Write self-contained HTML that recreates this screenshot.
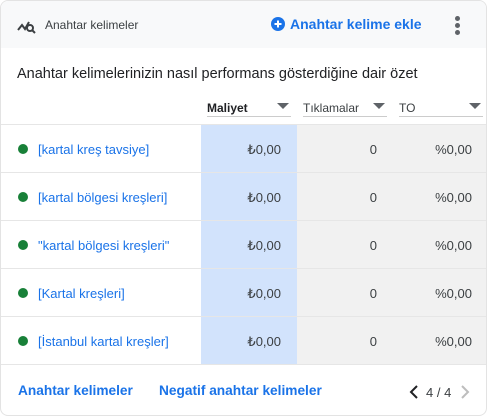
<!DOCTYPE html>
<html><head><meta charset="utf-8"><style>
*{margin:0;padding:0;box-sizing:border-box}
body{width:487px;height:416px;background:#fff;font-family:"Liberation Sans",Arial,sans-serif;position:relative;overflow:hidden}
.card{position:absolute;left:0;top:0;width:487px;height:416px;border:1px solid #e3e3e3;border-radius:8px;overflow:hidden}
.hdr{position:absolute;left:0;top:0;width:487px;height:47px;background:#f8f9fa}
.t{position:absolute;white-space:nowrap}
.blue{color:#1a73e8}
.col{position:absolute;top:124px;height:240px}
.row{position:absolute;left:0;width:487px;height:1px;background:#e6e6e6}
.dot{position:absolute;left:17px;width:10px;height:10px;border-radius:50%;background:#188038}
.hc{position:absolute;top:96px;height:20px;border-bottom:1px solid #ccc;font-size:12px;color:#3c4043}
.tri{position:absolute;right:2px;top:6px;width:0;height:0;border-left:6px solid transparent;border-right:6px solid transparent;border-top:6px solid #5f6368}
.num{position:absolute;font-size:13px;color:#3c4043;text-align:right}
.kw{position:absolute;left:37px;font-size:13px;color:#1a73e8}
</style></head><body>
<div class="card">
<div class="hdr"></div>
<svg style="position:absolute;left:16px;top:17px" width="20" height="16" viewBox="0 0 20 16"><path d="M1 12 L5 7 L8 11 L12 4" fill="none" stroke="#3c4043" stroke-width="2"/><circle cx="13" cy="10" r="3" fill="none" stroke="#3c4043" stroke-width="2"/><path d="M15 12 L18 15" stroke="#3c4043" stroke-width="2"/></svg>
<div class="t" style="left:44px;top:17px;font-size:12px;color:#3c4043">Anahtar kelimeler</div>
<svg style="position:absolute;left:270px;top:16px" width="14" height="14" viewBox="0 0 14 14"><circle cx="7" cy="7" r="7" fill="#1a73e8"/><path d="M7 3.5V10.5M3.5 7H10.5" stroke="#fff" stroke-width="2"/></svg>
<div class="t blue" style="left:289px;top:15px;font-size:14px;font-weight:bold">Anahtar kelime ekle</div>
<div style="position:absolute;left:454px;top:15px;width:5px;height:5px;border-radius:50%;background:#5f6368"></div>
<div style="position:absolute;left:454px;top:22px;width:5px;height:5px;border-radius:50%;background:#5f6368"></div>
<div style="position:absolute;left:454px;top:29px;width:5px;height:5px;border-radius:50%;background:#5f6368"></div>
<div class="t" style="left:16px;top:65px;font-size:14.5px;color:#202124">Anahtar kelimelerinizin nasıl performans gösterdiğine dair özet</div>
<div class="hc" style="left:206px;width:84px;font-weight:bold;color:#202124"><span style="position:absolute;top:4px">Maliyet</span><div class="tri"></div></div>
<div class="hc" style="left:302px;width:84px"><span style="position:absolute;top:4px">Tıklamalar</span><div class="tri"></div></div>
<div class="hc" style="left:398px;width:84px"><span style="position:absolute;top:4px">TO</span><div class="tri"></div></div>
<div class="col" style="left:200px;width:96px;background:#d2e3fc"></div>
<div class="col" style="left:296px;width:191px;background:#f1f1f1"></div>
<div class="row" style="top:123px"></div><div class="row" style="top:171px"></div><div class="row" style="top:219px"></div><div class="row" style="top:267px"></div><div class="row" style="top:315px"></div><div class="row" style="top:363px"></div>
<div class="dot" style="top:143px"></div><div class="kw" style="top:141px">[kartal kreş tavsiye]</div>
<div class="dot" style="top:191px"></div><div class="kw" style="top:189px">[kartal bölgesi kreşleri]</div>
<div class="dot" style="top:239px"></div><div class="kw" style="top:237px">"kartal bölgesi kreşleri"</div>
<div class="dot" style="top:287px"></div><div class="kw" style="top:285px">[Kartal kreşleri]</div>
<div class="dot" style="top:335px"></div><div class="kw" style="top:333px">[İstanbul kartal kreşler]</div>
<div class="num" style="left:200px;width:80px;top:141px">₺0,00</div><div class="num" style="left:296px;width:80px;top:141px">0</div><div class="num" style="left:390px;width:81px;top:141px">%0,00</div>
<div class="num" style="left:200px;width:80px;top:189px">₺0,00</div><div class="num" style="left:296px;width:80px;top:189px">0</div><div class="num" style="left:390px;width:81px;top:189px">%0,00</div>
<div class="num" style="left:200px;width:80px;top:237px">₺0,00</div><div class="num" style="left:296px;width:80px;top:237px">0</div><div class="num" style="left:390px;width:81px;top:237px">%0,00</div>
<div class="num" style="left:200px;width:80px;top:285px">₺0,00</div><div class="num" style="left:296px;width:80px;top:285px">0</div><div class="num" style="left:390px;width:81px;top:285px">%0,00</div>
<div class="num" style="left:200px;width:80px;top:333px">₺0,00</div><div class="num" style="left:296px;width:80px;top:333px">0</div><div class="num" style="left:390px;width:81px;top:333px">%0,00</div>
<div class="t blue" style="left:17px;top:382px;font-size:13.7px;font-weight:bold">Anahtar kelimeler</div>
<div class="t blue" style="left:158px;top:382px;font-size:13.7px;font-weight:bold">Negatif anahtar kelimeler</div>
<svg style="position:absolute;left:408px;top:384px" width="10" height="14" viewBox="0 0 10 14"><path d="M8 1L2 7L8 13" fill="none" stroke="#202124" stroke-width="2"/></svg>
<div class="t" style="left:425px;top:384px;font-size:13px;color:#3c4043">4 / 4</div>
<svg style="position:absolute;left:459px;top:384px" width="10" height="14" viewBox="0 0 10 14"><path d="M2 1L8 7L2 13" fill="none" stroke="#bdbdbd" stroke-width="2"/></svg>
</div>
</body></html>
